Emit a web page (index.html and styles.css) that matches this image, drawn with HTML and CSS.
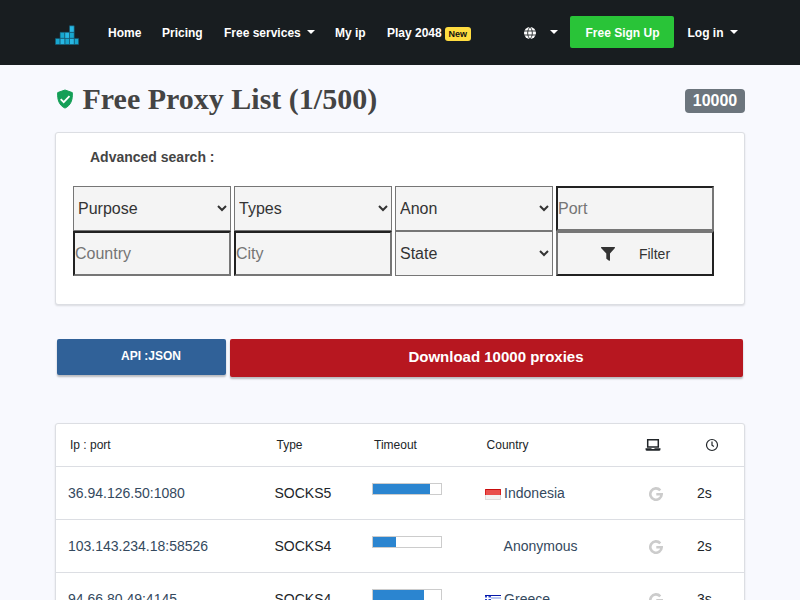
FILE: index.html
```html
<!DOCTYPE html>
<html lang="en">
<head>
<meta charset="utf-8">
<title>Free Proxy List</title>
<link rel="stylesheet" href="styles.css">
</head>
<body>
<header class="navbar">
  <nav class="container nav">
    <a class="logo"><svg width="24" height="20" viewBox="0 0 24 20"><g stroke="#16536a" stroke-width=".6"><path fill="#18a7cf" d="M.4 13.400h4.700v6.100H.4zM9.800 13.400h4.700v6.100H9.800zM19.200 13.400h4.400v6.100h-4.400zM5.100 7.300h4.700v6.100H5.100zM14.500 7.300h4.700v6.100h-4.700z"/><path fill="#28b8e4" d="M5.100 13.400h4.700v6.100H5.100zM14.500 13.400h4.700v6.100h-4.700zM9.800 7.300h4.700v6.100H9.800zM14.500.8h4.700v6.500h-4.700z"/></g></svg></a>
    <a>Home</a>
    <a>Pricing</a>
    <a>Free services<i class="caret"></i></a>
    <a>My ip</a>
    <a>Play 2048<span class="badge-new">New</span></a>
    <a class="globe"><svg width="12" height="12" viewBox="0 0 12 12"><circle cx="6" cy="6" r="6" fill="#fff"/><path d="M0 4h12M0 8h12M6 0C2.900 3 2.900 9 6 12M6 0c3.100 3 3.100 9 0 12" fill="none" stroke="#181d20" stroke-width=".85"/></svg><i class="caret"></i></a>
    <a class="signup">Free Sign Up</a>
    <a class="login">Log in<i class="caret"></i></a>
  </nav>
</header>
<main class="container">
  <div class="title-row">
    <svg class="shield" width="18" height="20" viewBox="0 0 18 20"><path fill="#149f57" d="M9 1l7.300 2.600c.5 6.900-1.300 12.800-7.300 15.500C3 16.400 1.200 10.500 1.700 3.600z" stroke="#149f57" stroke-width="1" stroke-linejoin="round"/><path d="M4.700 10.100l3 3 5.800-6" fill="none" stroke="#fff" stroke-width="1.800"/></svg>
    <h1>Free Proxy List (1/500)</h1>
    <span class="count">10000</span>
  </div>
  <section class="card search">
    <h2>Advanced search :</h2>
    <form class="filters">
      <select><option>Purpose</option></select>
      <select><option>Types</option></select>
      <select><option>Anon</option></select>
      <input placeholder="Port">
      <input placeholder="Country">
      <input placeholder="City">
      <select><option>State</option></select>
      <button type="button"><svg width="16" height="16" viewBox="0 0 16 16"><path d="M1.500 1h13q.9.500.200 1.300L10 7.500v6.800q-.3.800-1 .4L6.700 13q-.4-.3-.4-.8V7.500L1.300 2.300Q.6 1.500 1.500 1z" fill="#333"/></svg><span>Filter</span></button>
    </form>
  </section>
  <div class="actions">
    <a class="api">API :JSON</a>
    <a class="download">Download 10000 proxies</a>
  </div>
  <section class="card table">
    <div class="row head">
      <span>Ip : port</span><span>Type</span><span>Timeout</span><span>Country</span>
      <span><svg class="laptop" width="16" height="14" viewBox="0 0 16 14"><path d="M2.700 9V1.700h10.600V9z" fill="none" stroke="#212529" stroke-width="1.500"/><path d="M.5 10.300h5.800l.5.700h2.400l.5-.7h5.800v1q0 1.500-1.500 1.500H2Q.5 12.800.5 11.300z" fill="#212529"/></svg></span>
      <span><svg class="clock" width="14" height="14" viewBox="0 0 14 14"><circle cx="7" cy="7" r="5.500" fill="none" stroke="#212529" stroke-width="1.200"/><path d="M7 3.500V7.300l1.900 1.300" fill="none" stroke="#212529" stroke-width="1.200"/></svg></span>
    </div>
    <div class="row">
      <a>36.94.126.50:1080</a><span>SOCKS5</span><span class="bar"><b style="width:57px"></b></span>
      <a class="country"><svg width="16" height="11" viewBox="0 0 16 11"><path fill="#e9504d" d="M0 0h16v6H0z"/><path fill="#f3f3f3" d="M0 6h16v5H0z"/><path d="M0 .5h16" stroke="#c70d0d"/><path d="M.5 0v6M15.500 0v6" stroke="#d72020"/><path d="M0 10.500h16M.5 6v5M15.500 6v5" stroke="#ddd"/></svg>Indonesia</a>
      <span class="google"><svg width="14" height="14" viewBox="0 0 14 14"><path d="M11.300 3.300A5.700 5.700 0 1 0 12.700 7.200H7.300" fill="none" stroke="#ccc" stroke-width="2.600"/></svg></span><span>2s</span>
    </div>
    <div class="row">
      <a>103.143.234.18:58526</a><span>SOCKS4</span><span class="bar"><b style="width:23px"></b></span>
      <a class="country anonymous">Anonymous</a>
      <span class="google"><svg width="14" height="14" viewBox="0 0 14 14"><path d="M11.300 3.300A5.700 5.700 0 1 0 12.700 7.200H7.300" fill="none" stroke="#ccc" stroke-width="2.600"/></svg></span><span>2s</span>
    </div>
    <div class="row">
      <a>94.66.80.49:4145</a><span>SOCKS4</span><span class="bar"><b style="width:51px"></b></span>
      <a class="country"><svg width="16" height="11" viewBox="0 0 16 11"><path fill="#fff" d="M0 0h16v11H0z"/><path d="M0 .5h16" stroke="#0618a8"/><path d="M6 3h10M6 5.500h10M0 8h16M0 10.500h16" stroke="#7890e4" stroke-width="1.200"/><path d="M0 1h2v1.500H0zM3.500 1H6v1.500H3.500zM0 4h2v2H0zM3.500 4H6v2H3.500z" fill="#2b45c8"/></svg>Greece</a>
      <span class="google"><svg width="14" height="14" viewBox="0 0 14 14"><path d="M11.300 3.300A5.700 5.700 0 1 0 12.700 7.200H7.300" fill="none" stroke="#ccc" stroke-width="2.600"/></svg></span><span>3s</span>
    </div>
  </section>
</main>
</body>
</html>
```
FILE: styles.css
```css
* { box-sizing: border-box; }
body {
  margin: 0;
  height: 600px;
  overflow: hidden;
  background: #f8f9fe;
  font: 14px/20px "Liberation Sans", Arial, sans-serif;
  color: #212529;
}
svg { display: block; flex: none; }
.container { width: 690px; margin: 0 auto; }
.navbar { height: 65px; background: #181d20; }
.nav {
  display: grid;
  grid-template-columns: 53px 54px 62px 111px 52px 137px 46px 104px 71px;
  align-items: center;
  height: 65px;
  color: #fff;
  font-size: 12px;
  font-weight: bold;
  white-space: nowrap;
}
.nav a { display: flex; align-items: center; }
.logo { padding-top: 4px; }
.caret {
  margin: -2px 0 0 6px;
  border: 4px solid transparent;
  border-top-color: #fff;
  border-bottom: 0;
}
.badge-new {
  margin: 2px 0 0 3px;
  width: 26px;
  height: 14px;
  border-radius: 3px;
  background: #ffdc40;
  color: #111;
  font-size: 9px;
  line-height: 14px;
  text-align: center;
}
.globe .caret { margin-left: 13.500px; }
.nav .signup {
  justify-content: center;
  height: 32px;
  margin-top: -1px;
  border-radius: 2px;
  background: #29c438;
  padding: 2px 0 0 1px;
}
.login { padding-left: 13.500px; }
.title-row { display: flex; height: 67px; align-items: center; }
.shield { margin-left: 1px; }
h1 {
  margin: 0 auto 0 8.500px;
  color: #444;
  font: bold 30px/36px "Liberation Serif", serif;
}
.count {
  width: 60px;
  height: 24px;
  margin-top: 5px;
  border-radius: 4px;
  background: #6c757d;
  color: #fff;
  font-size: 16px;
  font-weight: bold;
  line-height: 24px;
  text-align: center;
}
.card {
  border: 1px solid #dcdee3;
  border-radius: 3px;
  background: #fff;
  box-shadow: 0 1px 2px rgba(0, 0, 0, .12);
}
.search { height: 173px; padding: 14px 17px; }
h2 { margin: 0 0 19px 17px; color: #444; font-size: 14px; line-height: 20px; }
.filters { display: grid; grid-template-columns: repeat(4, 158px); column-gap: 3px; }
.filters select, .filters input, .filters button {
  width: 158px;
  height: 45px;
  margin: 0;
  border-radius: 0;
  background: #f4f4f4;
  color: #333;
  font: 16px "Liberation Sans", Arial, sans-serif;
}
.filters select { border: 1px solid #767676; padding: 0; }
.filters input { border: 2px solid; border-color: #212121 #767676 #767676 #212121; padding: 0; }
.filters input::placeholder { color: #757575; }
.filters button {
  display: flex;
  align-items: center;
  justify-content: center;
  gap: 23px;
  border: 2px solid;
  border-color: #767676 #212121 #212121 #767676;
  font-size: 14px;
}
.actions { display: flex; gap: 4px; padding: 34px 2px 0; height: 118px; align-items: flex-start; }
.actions a {
  border-radius: 2px;
  color: #fff;
  font-weight: bold;
  text-align: center;
  box-shadow: 0 2px 2px rgba(0, 0, 0, .25);
}
.api { width: 169px; height: 36px; padding-left: 19px; background: #306198; font-size: 12px; line-height: 34px; }
.download { width: 513px; height: 38px; padding-left: 19px; background: #b71720; font-size: 15px; line-height: 36px; }
.table { height: 204px; }
.row {
  display: grid;
  grid-template-columns: 206.500px 97.500px 112.600px 161.400px 51px 36px;
  height: 53px;
  padding-left: 12px;
  border-top: 1px solid #dcdee3;
  align-items: center;
}
.row a { color: #34495e; }
.head { height: 42px; border: 0; padding-left: 14px; font-size: 12px; }
.laptop { margin: -1px 0 0 -3px; }
.clock { margin: -1px 0 0 6px; }
.bar { width: 70px; height: 12px; margin-top: -8px; border: 1px solid #ccc; }
.bar b { display: block; height: 10px; background: #2b85d0; }
.country { display: flex; align-items: center; gap: 3.500px; }
.country svg { margin-top: 2px; }
.anonymous { padding-left: 19px; }
.google { padding: 2px 0 0 3px; }
```
